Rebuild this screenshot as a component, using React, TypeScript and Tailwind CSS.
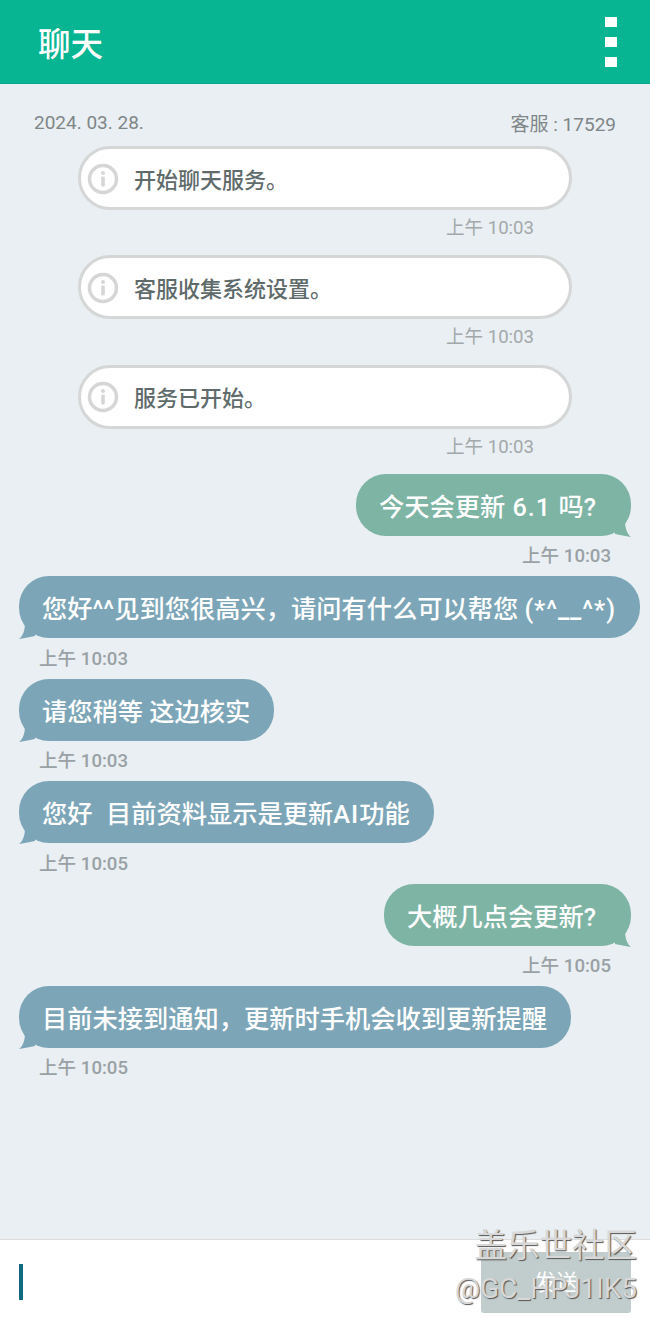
import type { ReactNode } from "react";

const FONT = "font-['Roboto','Noto_Sans_CJK_SC',sans-serif]";

function InfoIcon() {
  return (
    <svg width="32" height="32" viewBox="0 0 32 32" className="mt-[1px] shrink-0">
      <circle cx="16" cy="16" r="13.5" fill="none" stroke="#d6d6d6" strokeWidth="3.5" />
      <circle cx="16" cy="10" r="2" fill="#d6d6d6" />
      <rect x="14.2" y="13.5" width="3.6" height="10" rx="1" fill="#d6d6d6" />
    </svg>
  );
}

function SystemMessage({ text }: { text: string }) {
  return (
    <div className="flex flex-col">
      <div className="ml-[78px] flex h-[64px] w-[494px] items-center rounded-[32px] border-[3px] border-[#d5d6d6] bg-white pl-[6px]">
        <InfoIcon />
        <span className="ml-[15px] pt-[4px] text-[22px] font-medium text-[#5f6b6b]">{text}</span>
      </div>
      <div className="mt-[6px] mr-[116px] h-[39.33px] text-right text-[18.6px] leading-[24px] text-[#a3a9ab]">
        上午 10:03
      </div>
    </div>
  );
}

function Bubble({
  text,
  time,
  side,
}: {
  text: ReactNode;
  time: string;
  side: "left" | "right";
}) {
  if (side === "right") {
    return (
      <div className="flex flex-col items-end pr-[19px]">
        <div className="relative flex h-[62px] items-center rounded-[30px] bg-[#7db4a4] pt-[6px] pr-[35px] pl-[23px] text-[25.25px] font-medium whitespace-pre text-white">
          {text}
          <svg width="16" height="16" viewBox="0 0 16 16" className="absolute right-0 bottom-[-1px]">
            <path d="M0 10 C5 8 8 4 9 0 L10 0 C10 7 12 13 16 16 C10 15 5 14 0 13 Z" fill="#7db4a4" />
          </svg>
        </div>
        <div className="mt-[8.5px] mr-[20px] h-[31.9px] text-[18.6px] leading-[24px] font-medium text-[#9aa1a5]">{time}</div>
      </div>
    );
  }
  return (
    <div className="flex flex-col items-start pl-[19px]">
      <div className="relative flex h-[62px] items-center rounded-[30px] bg-[#7ca6b7] pt-[6px] pr-[24px] pl-[23px] text-[25.25px] font-medium whitespace-pre text-white">
        {text}
        <svg width="16" height="16" viewBox="0 0 16 16" className="absolute bottom-[-1px] left-0">
          <path d="M16 10 C11 8 8 4 7 0 L6 0 C6 7 4 13 0 16 C6 15 11 14 16 13 Z" fill="#7ca6b7" />
        </svg>
      </div>
      <div className="mt-[8.5px] ml-[20px] h-[31.9px] text-[18.6px] leading-[24px] font-medium text-[#9aa1a5]">{time}</div>
    </div>
  );
}

export default function App() {
  return (
    <div className={`relative flex h-[1323px] w-[650px] flex-col overflow-hidden bg-[#e9eff2] ${FONT}`}>
      {/* Header */}
      <header className="flex h-[84px] shrink-0 items-center justify-between border-b border-[#0aa488] bg-[#07b592] pr-[33px] pl-[38px]">
        <h1 className="pt-[8px] text-[32.5px] font-medium text-white">聊天</h1>
        <div className="flex flex-col gap-[10px]">
          <div className="h-[10px] w-[12px] bg-white" />
          <div className="h-[10px] w-[12px] bg-white" />
          <div className="h-[10px] w-[12px] bg-white" />
        </div>
      </header>

      {/* Messages */}
      <main className="flex-1">
        <div className="flex h-[62px] justify-between pt-[27px] pr-[34px] pl-[34px]">
          <span className="text-[19px] leading-[24px] text-[#7f8688]">2024. 03. 28.</span>
          <span className="mt-[2px] text-[19px] leading-[24px] text-[#7f8688]">客服 : 17529</span>
        </div>
        <SystemMessage text="开始聊天服务。" />
        <SystemMessage text="客服收集系统设置。" />
        <SystemMessage text="服务已开始。" />
        <Bubble
          side="right"
          text={
            <>
              今天会更新<span className="tracking-[1px]"> 6.1 </span>吗?
            </>
          }
          time="上午 10:03"
        />
        <Bubble
          side="left"
          text={
            <>
              您好^^见到您很高兴，请问有什么可以帮您 <span className="tracking-[0.9px]">(*^__^*)</span>
            </>
          }
          time="上午 10:03"
        />
        <Bubble side="left" text="请您稍等 这边核实" time="上午 10:03" />
        <Bubble
          side="left"
          text={
            <>
              您好<span className="tracking-[0.5px]">{"  "}</span>目前资料显示是更新<span className="tracking-[1px]">AI</span>功能
            </>
          }
          time="上午 10:05"
        />
        <Bubble side="right" text="大概几点会更新?" time="上午 10:05" />
        <Bubble side="left" text="目前未接到通知，更新时手机会收到更新提醒" time="上午 10:05" />
      </main>

      {/* Input bar */}
      <footer className="flex h-[84px] shrink-0 items-center justify-between border-t border-[#dcdcdc] bg-white pr-[19px] pl-[19px]">
        <div className="h-[36px] w-[4px] bg-[#0f6a80]" />
        <button className="mt-[2px] flex h-[61px] w-[150px] items-center justify-center rounded-[3px] bg-[#c1cccc] text-[22px] text-white">
          发送
        </button>
      </footer>

      {/* Watermark */}
      <div className="absolute right-[13px] bottom-[16px] flex flex-col items-end text-[#d8d8d8] [text-shadow:1px_1px_1px_#555]">
        <span className="text-[32.5px] leading-[50px]">盖乐世社区</span>
        <span className="text-[28px] leading-[36px]">@GC_HPJ1IK5</span>
      </div>
    </div>
  );
}
